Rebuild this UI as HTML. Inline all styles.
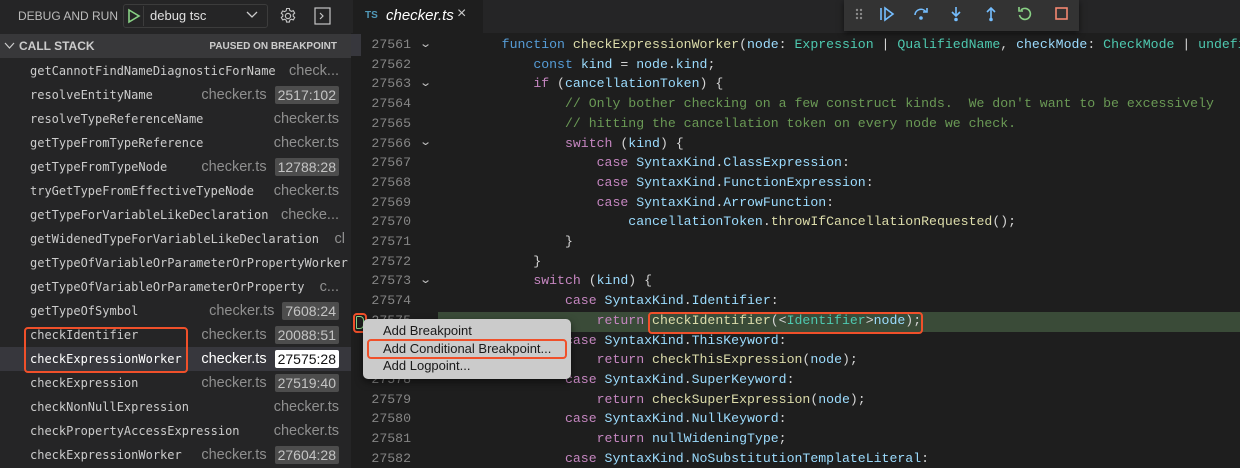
<!DOCTYPE html>
<html><head><meta charset="utf-8"><style>
*{margin:0;padding:0;box-sizing:border-box}
body{width:1240px;height:468px;overflow:hidden;background:#1e1e1e;position:relative;font-family:"Liberation Sans",sans-serif}
.abs{position:absolute}
#side{left:0;top:0;width:351px;height:468px;background:#252526;overflow:hidden}
.row{position:absolute;left:0;width:351px;height:24px;line-height:24px}
.nm{position:absolute;left:30px;font-family:"DejaVu Sans Mono","Liberation Mono",monospace;font-size:12px;color:#cccccc;white-space:nowrap}
.rt{position:absolute;right:12px;top:0;display:flex;align-items:center;height:24px;font-size:14.5px;color:#8f8f8f;white-space:nowrap}
.bd{margin-left:8px;background:#4d4d4d;color:#c4c4c4;font-size:14px;padding:0 3px;height:18px;line-height:18px;border-radius:2px}
.ln{position:absolute;left:351px;width:60px;text-align:right;font-family:"Liberation Mono",monospace;font-size:13.2px;color:#858585;height:19.7px;line-height:19.7px}
.cd{position:absolute;left:470px;font-family:"Liberation Mono",monospace;font-size:13.2px;color:#d4d4d4;white-space:pre;height:19.7px;line-height:19.7px}
.k{color:#569cd6}.c{color:#c586c0}.f{color:#dcdcaa}.v{color:#9cdcfe}.t{color:#4ec9b0}.g{color:#6a9955}
.fold{position:absolute;left:421px;font-size:11px;color:#c5c5c5;transform:scaleX(1.4)}
.red{position:absolute;border:2px solid #f0502a;border-radius:4px}
</style></head><body>
<div id="side" class="abs">
 <div class="abs" style="left:18px;top:9px;font-size:12px;color:#bbbbbb">DEBUG AND RUN</div>
 <div class="abs" style="left:123px;top:4px;width:145px;height:24px;border:1px solid #3c3c3c;border-radius:3px;background:#252526"></div>
 <svg class="abs" style="left:127px;top:8px" width="14" height="16"><path d="M2 2 L12 8 L2 14 Z" fill="none" stroke="#89d185" stroke-width="1.6"/></svg>
 <div class="abs" style="left:143px;top:6px;width:1px;height:20px;background:#3c3c3c"></div>
 <div class="abs" style="left:150px;top:8px;font-size:13px;color:#e0e0e0">debug tsc</div>
 <svg class="abs" style="left:246px;top:11px" width="12" height="8"><path d="M1 1 L6 6 L11 1" fill="none" stroke="#cccccc" stroke-width="1.3"/></svg>
 <svg class="abs" style="left:279px;top:7px" width="18" height="18" viewBox="0 0 18 18"><circle cx="9" cy="9" r="2.6" fill="none" stroke="#c5c5c5" stroke-width="1.2"/><path d="M7.6 1.5h2.8l.4 2 1.6.9 1.9-.7 1.4 2.4-1.5 1.3v1.8l1.5 1.3-1.4 2.4-1.9-.7-1.6.9-.4 2H7.6l-.4-2-1.6-.9-1.9.7-1.4-2.4 1.5-1.3V7.6L2.3 6.3l1.4-2.4 1.9.7 1.600-.9z" fill="none" stroke="#c5c5c5" stroke-width="1.1"/></svg>
 <svg class="abs" style="left:314px;top:7px" width="17" height="18"><rect x="1" y="1" width="15" height="16" fill="none" stroke="#c5c5c5" stroke-width="1.2"/><path d="M6 6 L9 9 L6 12" fill="none" stroke="#c5c5c5" stroke-width="1.2"/></svg>
 <div class="abs" style="left:0;top:34px;width:351px;height:24px;background:#38383a"></div>
 <svg class="abs" style="left:4px;top:42px" width="11" height="8"><path d="M1 1 L5.5 6 L10 1" fill="none" stroke="#cccccc" stroke-width="1.2"/></svg>
 <div class="abs" style="left:19px;top:39px;font-size:12px;font-weight:bold;color:#cccccc">CALL STACK</div>
 <div class="abs" style="right:14px;top:41px;font-size:10px;font-weight:bold;color:#cccccc">PAUSED ON BREAKPOINT</div>

 <div class="row" style="top:59px"><span class="nm">getCannotFindNameDiagnosticForName</span><span class="rt">check...</span></div>
 <div class="row" style="top:83px"><span class="nm">resolveEntityName</span><span class="rt">checker.ts<span class="bd">2517:102</span></span></div>
 <div class="row" style="top:107px"><span class="nm">resolveTypeReferenceName</span><span class="rt">checker.ts</span></div>
 <div class="row" style="top:131px"><span class="nm">getTypeFromTypeReference</span><span class="rt">checker.ts</span></div>
 <div class="row" style="top:155px"><span class="nm">getTypeFromTypeNode</span><span class="rt">checker.ts<span class="bd">12788:28</span></span></div>
 <div class="row" style="top:179px"><span class="nm">tryGetTypeFromEffectiveTypeNode</span><span class="rt">checker.ts</span></div>
 <div class="row" style="top:203px"><span class="nm">getTypeForVariableLikeDeclaration</span><span class="rt">checke...</span></div>
 <div class="row" style="top:227px"><span class="nm">getWidenedTypeForVariableLikeDeclaration</span><span class="rt" style="right:6px">cl</span></div>
 <div class="row" style="top:251px"><span class="nm">getTypeOfVariableOrParameterOrPropertyWorker</span></div>
 <div class="row" style="top:275px"><span class="nm">getTypeOfVariableOrParameterOrProperty</span><span class="rt">c...</span></div>
 <div class="row" style="top:299px"><span class="nm">getTypeOfSymbol</span><span class="rt">checker.ts<span class="bd">7608:24</span></span></div>
 <div class="row" style="top:323px"><span class="nm">checkIdentifier</span><span class="rt">checker.ts<span class="bd">20088:51</span></span></div>
 <div class="row" style="top:347px;background:#37373d"><span class="nm" style="color:#fff">checkExpressionWorker</span><span class="rt" style="color:#fff">checker.ts<span class="bd" style="background:#fff;color:#111">27575:28</span></span></div>
 <div class="row" style="top:371px"><span class="nm">checkExpression</span><span class="rt">checker.ts<span class="bd">27519:40</span></span></div>
 <div class="row" style="top:395px"><span class="nm">checkNonNullExpression</span><span class="rt">checker.ts</span></div>
 <div class="row" style="top:419px"><span class="nm">checkPropertyAccessExpression</span><span class="rt">checker.ts</span></div>
 <div class="row" style="top:443px"><span class="nm">checkExpressionWorker</span><span class="rt">checker.ts<span class="bd">27604:28</span></span></div>
 <div class="red" style="left:24px;top:327px;width:164px;height:46px"></div>
</div>

<div class="abs" style="left:351px;top:0;width:889px;height:33px;background:#252526"></div>
<div class="abs" style="left:353px;top:0;width:130px;height:33px;background:#1e1e1e"></div>
<div class="abs" style="left:365px;top:10px;font-size:10px;font-weight:bold;color:#519aba">TS</div>
<div class="abs" style="left:386px;top:7px;font-size:15px;font-style:italic;color:#fff">checker.ts</div>
<div class="abs" style="left:457px;top:5px;font-size:16px;color:#cccccc">×</div>

<div class="abs" style="left:844px;top:0;width:235px;height:31px;background:#333333;box-shadow:0 2px 6px rgba(0,0,0,.6)"></div>
<svg class="abs" style="left:844px;top:0" width="235" height="31">
 <g fill="#8a8a8a"><circle cx="13" cy="10" r="1.2"/><circle cx="17" cy="10" r="1.2"/><circle cx="13" cy="14" r="1.2"/><circle cx="17" cy="14" r="1.2"/><circle cx="13" cy="18" r="1.2"/><circle cx="17" cy="18" r="1.2"/></g>
 <g fill="none" stroke="#75beff" stroke-width="1.6"><path d="M37 8v12"/><path d="M41 8 L49 14 L41 20Z"/>
 <path d="M71 15a6 6 0 0 1 11-3"/><path d="M83 8v4h-4"/>
 <path d="M112 7v8"/><path d="M108 12l4 4 4-4"/>
 <path d="M147 20V9"/><path d="M143 12l4-4 4 4"/></g>
 <g fill="#75beff"><circle cx="77" cy="18" r="1.8"/><circle cx="112" cy="19.5" r="1.8"/><circle cx="147" cy="19.5" r="1.8"/></g>
 <path d="M177 10a5.5 5.5 0 1 1-1.5 5" fill="none" stroke="#89d185" stroke-width="1.6"/><path d="M175 7v4h4" fill="none" stroke="#89d185" stroke-width="1.6"/>
 <rect x="212" y="8" width="11" height="11" fill="none" stroke="#f48771" stroke-width="1.6"/>
</svg>

<div class="abs" style="left:438px;top:312px;width:802px;height:20px;background:#3a4b38"></div>
<div class="abs" style="left:351px;top:34px;width:10px;height:22px;background:#37373d"></div>

<div class="ln" style="top:35px">27561</div><div class="fold" style="top:37px">⌄</div>
<div class="ln" style="top:54.7px">27562</div>
<div class="ln" style="top:74.4px">27563</div><div class="fold" style="top:76px">⌄</div>
<div class="ln" style="top:94.1px">27564</div>
<div class="ln" style="top:113.8px">27565</div>
<div class="ln" style="top:133.5px">27566</div><div class="fold" style="top:135px">⌄</div>
<div class="ln" style="top:153.2px">27567</div>
<div class="ln" style="top:172.9px">27568</div>
<div class="ln" style="top:192.6px">27569</div>
<div class="ln" style="top:212.3px">27570</div>
<div class="ln" style="top:232px">27571</div>
<div class="ln" style="top:251.7px">27572</div>
<div class="ln" style="top:271.4px">27573</div><div class="fold" style="top:273px">⌄</div>
<div class="ln" style="top:291.1px">27574</div>
<div class="ln" style="top:310.8px">27575</div>
<div class="ln" style="top:330.5px">27576</div>
<div class="ln" style="top:350.2px">27577</div>
<div class="ln" style="top:369.9px">27578</div>
<div class="ln" style="top:389.6px">27579</div>
<div class="ln" style="top:409.3px">27580</div>
<div class="ln" style="top:429px">27581</div>
<div class="ln" style="top:448.7px">27582</div>

<div class="cd" style="top:35px">    <span class="k">function</span> <span class="f">checkExpressionWorker</span>(<span class="v">node</span>: <span class="t">Expression</span> | <span class="t">QualifiedName</span>, <span class="v">checkMode</span>: <span class="t">CheckMode</span> | <span class="t">undefi</span></div>
<div class="cd" style="top:54.7px">        <span class="k">const</span> <span class="v">kind</span> = <span class="v">node</span>.<span class="v">kind</span>;</div>
<div class="cd" style="top:74.4px">        <span class="c">if</span> (<span class="v">cancellationToken</span>) {</div>
<div class="cd g" style="top:94.1px">            // Only bother checking on a few construct kinds.  We don't want to be excessively</div>
<div class="cd g" style="top:113.8px">            // hitting the cancellation token on every node we check.</div>
<div class="cd" style="top:133.5px">            <span class="c">switch</span> (<span class="v">kind</span>) {</div>
<div class="cd" style="top:153.2px">                <span class="c">case</span> <span class="v">SyntaxKind</span>.<span class="v">ClassExpression</span>:</div>
<div class="cd" style="top:172.9px">                <span class="c">case</span> <span class="v">SyntaxKind</span>.<span class="v">FunctionExpression</span>:</div>
<div class="cd" style="top:192.6px">                <span class="c">case</span> <span class="v">SyntaxKind</span>.<span class="v">ArrowFunction</span>:</div>
<div class="cd" style="top:212.3px">                    <span class="v">cancellationToken</span>.<span class="f">throwIfCancellationRequested</span>();</div>
<div class="cd" style="top:232px">            }</div>
<div class="cd" style="top:251.7px">        }</div>
<div class="cd" style="top:271.4px">        <span class="c">switch</span> (<span class="v">kind</span>) {</div>
<div class="cd" style="top:291.1px">            <span class="c">case</span> <span class="v">SyntaxKind</span>.<span class="v">Identifier</span>:</div>
<div class="cd" style="top:310.8px">                <span class="c">return</span> <span class="f">checkIdentifier</span>(&lt;<span class="t">Identifier</span>&gt;<span class="v">node</span>);</div>
<div class="cd" style="top:330.5px">            <span class="c">case</span> <span class="v">SyntaxKind</span>.<span class="v">ThisKeyword</span>:</div>
<div class="cd" style="top:350.2px">                <span class="c">return</span> <span class="f">checkThisExpression</span>(<span class="v">node</span>);</div>
<div class="cd" style="top:369.9px">            <span class="c">case</span> <span class="v">SyntaxKind</span>.<span class="v">SuperKeyword</span>:</div>
<div class="cd" style="top:389.6px">                <span class="c">return</span> <span class="f">checkSuperExpression</span>(<span class="v">node</span>);</div>
<div class="cd" style="top:409.3px">            <span class="c">case</span> <span class="v">SyntaxKind</span>.<span class="v">NullKeyword</span>:</div>
<div class="cd" style="top:429px">                <span class="c">return</span> <span class="v">nullWideningType</span>;</div>
<div class="cd" style="top:448.7px">            <span class="c">case</span> <span class="v">SyntaxKind</span>.<span class="v">NoSubstitutionTemplateLiteral</span>:</div>

<div class="red" style="left:648px;top:312px;width:275px;height:22px"></div>
<div class="abs" style="left:356px;top:316px;width:8px;height:13px;border:1.5px solid #89d185;border-radius:1px 4px 4px 1px"></div>
<div class="red" style="left:353px;top:313px;width:14px;height:20px"></div>

<div class="abs" style="left:363px;top:319px;width:208px;height:60px;background:#cbcbcb;border-radius:5px;box-shadow:0 3px 8px rgba(0,0,0,.5)"></div>
<div class="abs" style="left:383px;top:323px;font-size:13px;color:#1a1a1a">Add Breakpoint</div>
<div class="abs" style="left:383px;top:341px;font-size:13px;color:#1a1a1a">Add Conditional Breakpoint...</div>
<div class="abs" style="left:383px;top:358px;font-size:13px;color:#1a1a1a">Add Logpoint...</div>
<div class="red" style="left:367px;top:339px;width:200px;height:20px"></div>
</body></html>
